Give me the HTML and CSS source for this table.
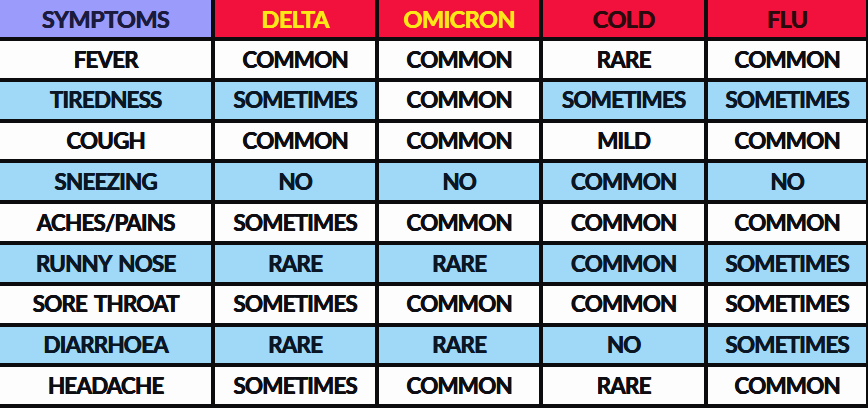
FILE: index.html
```html
<!DOCTYPE html>
<html lang="en">
<head>
<meta charset="utf-8">
<title>Symptoms comparison</title>
<link rel="stylesheet" href="styles.css">
</head>
<body>
<div class="chart">
  <div class="cell head head-sym">SYMPTOMS</div>
  <div class="cell head head-var">DELTA</div>
  <div class="cell head head-var">OMICRON</div>
  <div class="cell head head-dark">COLD</div>
  <div class="cell head head-dark">FLU</div>

  <div class="cell">FEVER</div>
  <div class="cell">COMMON</div>
  <div class="cell">COMMON</div>
  <div class="cell">RARE</div>
  <div class="cell">COMMON</div>

  <div class="cell blue">TIREDNESS</div>
  <div class="cell blue">SOMETIMES</div>
  <div class="cell">COMMON</div>
  <div class="cell blue">SOMETIMES</div>
  <div class="cell blue">SOMETIMES</div>

  <div class="cell">COUGH</div>
  <div class="cell">COMMON</div>
  <div class="cell">COMMON</div>
  <div class="cell">MILD</div>
  <div class="cell">COMMON</div>

  <div class="cell blue">SNEEZING</div>
  <div class="cell blue">NO</div>
  <div class="cell blue">NO</div>
  <div class="cell blue">COMMON</div>
  <div class="cell blue">NO</div>

  <div class="cell">ACHES/PAINS</div>
  <div class="cell">SOMETIMES</div>
  <div class="cell">COMMON</div>
  <div class="cell">COMMON</div>
  <div class="cell">COMMON</div>

  <div class="cell blue">RUNNY NOSE</div>
  <div class="cell blue">RARE</div>
  <div class="cell blue">RARE</div>
  <div class="cell blue">COMMON</div>
  <div class="cell blue">SOMETIMES</div>

  <div class="cell">SORE THROAT</div>
  <div class="cell">SOMETIMES</div>
  <div class="cell">COMMON</div>
  <div class="cell">COMMON</div>
  <div class="cell">SOMETIMES</div>

  <div class="cell blue">DIARRHOEA</div>
  <div class="cell blue">RARE</div>
  <div class="cell blue">RARE</div>
  <div class="cell blue">NO</div>
  <div class="cell blue">SOMETIMES</div>

  <div class="cell">HEADACHE</div>
  <div class="cell">SOMETIMES</div>
  <div class="cell">COMMON</div>
  <div class="cell">RARE</div>
  <div class="cell">COMMON</div>
</div>
</body>
</html>
```

FILE: styles.css
```css
html, body {
  margin: 0;
  padding: 0;
  background: #ffffff;
}

.chart {
  width: 868px;
  height: 408px;
  box-sizing: border-box;
  display: grid;
  grid-template-columns: 211px 160px 160px 161px 1fr;
  grid-template-rows: 37px repeat(9, 36.8px);
  column-gap: 4px;
  row-gap: 4px;
  padding: 0 2px 4px 0;
  background: #0c0c0e;
  font-family: "Lato", "Liberation Sans", sans-serif;
  font-weight: 700;
}

.cell {
  display: flex;
  align-items: center;
  justify-content: center;
  background: #fdfdfd;
  color: #0d0d12;
  font-size: 22.5px;
  letter-spacing: -0.9px;
  word-spacing: 3px;
  white-space: nowrap;
  line-height: 1;
  padding-top: 1px;
  text-shadow: 0.5px 0 0 currentColor, 0 0 0.6px currentColor;
}

.blue {
  background: #9fd9f7;
  color: #0b1624;
}

.head {
  font-size: 23.5px;
  letter-spacing: -0.6px;
  padding-top: 3px;
}

.head-sym {
  background: #9b9bfb;
  color: #1b1b3d;
}

.head-var {
  background: #f2113d;
  color: #fbe816;
}

.head-dark {
  background: #f2113d;
  color: #2b0a0e;
}
```
